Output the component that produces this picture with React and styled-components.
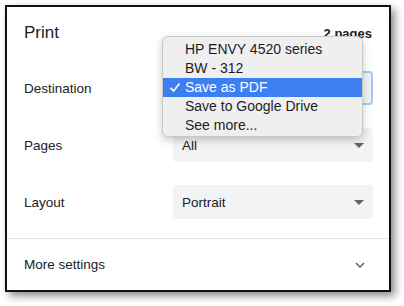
import React from "react";
import styled, { createGlobalStyle } from "styled-components";

const GlobalStyle = createGlobalStyle`
  html, body {
    margin: 0;
    padding: 0;
    background: #ffffff;
  }
  body {
    font-family: "Liberation Sans", Arial, sans-serif;
    color: #202124;
  }
`;

const Page = styled.div`
  width: 404px;
  height: 306px;
  padding: 5px 0 0 5px;
  box-sizing: border-box;
`;

const Card = styled.div`
  width: 386px;
  height: 287px;
  box-sizing: border-box;
  border: 2px solid #111;
  background: #fff;
  box-shadow: 4px 4px 8px rgba(0, 0, 0, 0.45);
  display: flex;
  flex-direction: column;
`;

const Body = styled.div`
  padding: 16px 16px 0 17px;
  display: flex;
  flex-direction: column;
`;

const Header = styled.div`
  display: flex;
  justify-content: space-between;
  align-items: baseline;
  height: 20px;
  line-height: 20px;
  margin-bottom: 28px;
`;

const Title = styled.h1`
  margin: 0;
  font-size: 17px;
  font-weight: 400;
`;

const PageCount = styled.span`
  font-size: 13px;
  font-weight: 700;
  margin-right: 1px;
`;

const Row = styled.div`
  display: flex;
  align-items: center;
  justify-content: space-between;
  height: 34px;
  margin-bottom: 23px;

  &:last-child {
    margin-bottom: 19px;
  }
`;

const Label = styled.span`
  font-size: 13.5px;
`;

const Select = styled.div`
  position: relative;
  width: 200px;
  height: 34px;
  box-sizing: border-box;
  background: #f1f3f4;
  border-radius: 4px;
  border: ${(p) => (p.$focused ? "2px solid #a6c5fa" : "none")};
  padding-left: ${(p) => (p.$focused ? "7px" : "9px")};
  display: flex;
  align-items: center;
  justify-content: space-between;
  font-size: 13.5px;
`;

const Value = styled.span`
  visibility: ${(p) => (p.$hidden ? "hidden" : "visible")};
`;

const Arrow = styled.span`
  width: 0;
  height: 0;
  margin-right: 9px;
  border-left: 5px solid transparent;
  border-right: 5px solid transparent;
  border-top: 5px solid #5f6368;
`;

const Menu = styled.ul`
  position: absolute;
  left: -13px;
  top: -37px;
  width: 201px;
  height: 101px;
  box-sizing: border-box;
  margin: 0;
  padding: 3px 0;
  list-style: none;
  background: #efefef;
  border: 1px solid #c9c9c9;
  border-radius: 6px;
  box-shadow: 0 3px 8px rgba(0, 0, 0, 0.22);
  z-index: 2;
`;

const MenuItem = styled.li`
  height: 19px;
  line-height: 19px;
  font-size: 14px;
  padding-left: 22px;
  position: relative;
  color: ${(p) => (p.$active ? "#fff" : "#1d1d1f")};
  background: ${(p) => (p.$active ? "#3b7ff2" : "transparent")};
`;

const Check = styled.svg`
  position: absolute;
  left: 6px;
  top: 4px;
`;

const Divider = styled.div`
  height: 1px;
  background: #e3e3e3;
`;

const MoreRow = styled.div`
  flex: 1;
  display: flex;
  align-items: center;
  justify-content: space-between;
  padding: 0 24px 0 17px;
  font-size: 13.5px;
`;

const printers = [
  "HP ENVY 4520 series",
  "BW - 312",
  "Save as PDF",
  "Save to Google Drive",
  "See more...",
];

const App = () => {
  return (
    <Page>
      <GlobalStyle />
      <Card>
        <Body>
          <Header>
            <Title>Print</Title>
            <PageCount>2 pages</PageCount>
          </Header>
          <Row>
            <Label>Destination</Label>
            <Select $focused>
              <Value $hidden>Save as PDF</Value>
              <Arrow />
              <Menu>
                {printers.map((name) => (
                  <MenuItem key={name} $active={name === "Save as PDF"}>
                    {name === "Save as PDF" && (
                      <Check width="12" height="11" viewBox="0 0 12 11">
                        <path
                          d="M1.5 5.8 L4.6 9 L10.5 1.5"
                          fill="none"
                          stroke="#fff"
                          strokeWidth="1.7"
                        />
                      </Check>
                    )}
                    {name}
                  </MenuItem>
                ))}
              </Menu>
            </Select>
          </Row>
          <Row>
            <Label>Pages</Label>
            <Select>
              <Value>All</Value>
              <Arrow />
            </Select>
          </Row>
          <Row>
            <Label>Layout</Label>
            <Select>
              <Value>Portrait</Value>
              <Arrow />
            </Select>
          </Row>
        </Body>
        <Divider />
        <MoreRow>
          <span>More settings</span>
          <svg width="10" height="6" viewBox="0 0 10 6">
            <path
              d="M1 1 L5 5 L9 1"
              fill="none"
              stroke="#5f6368"
              strokeWidth="1.5"
            />
          </svg>
        </MoreRow>
      </Card>
    </Page>
  );
};

export default App;
